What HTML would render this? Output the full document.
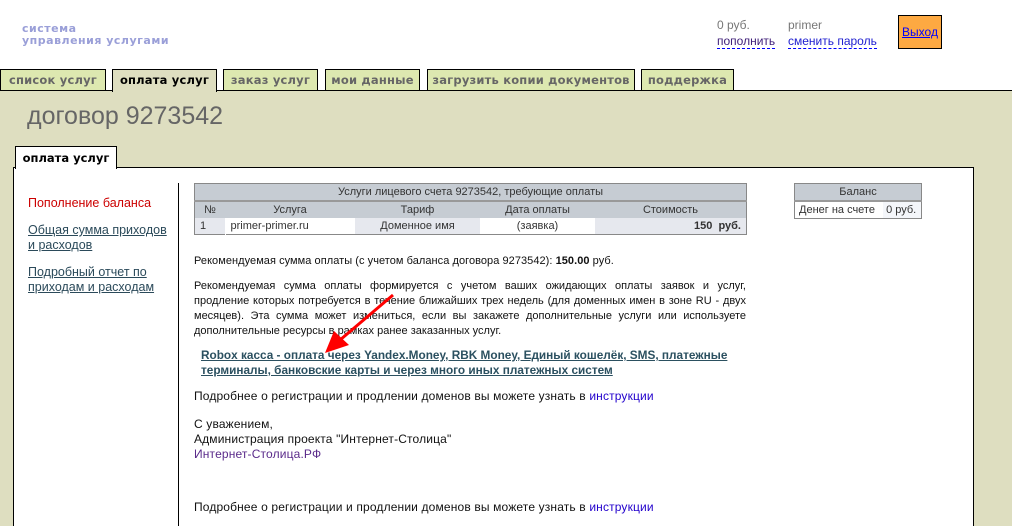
<!DOCTYPE html>
<html><head><meta charset="utf-8"><style>
html,body{margin:0;width:1012px;height:526px;overflow:hidden}
body{background:#fff;font-family:"Liberation Sans",Arial,sans-serif;position:relative}
.a{position:absolute}
.logo{left:22px;top:23px;color:#9a9fd8;font-weight:bold;font-size:11px;line-height:12px;font-family:"DejaVu Sans",sans-serif;letter-spacing:0.5px}
.tab{position:absolute;top:69px;height:20px;background:#dde8b0;border:1px solid #000;border-bottom:none;font-family:"DejaVu Sans",sans-serif;font-weight:bold;font-size:11.5px;color:#666;line-height:20px;text-align:center;letter-spacing:0.2px}
.band{left:0;top:90px;width:1012px;height:436px;background:#dedec0;border-top:1px solid #000}
.panel{left:13px;top:167px;width:959px;height:380px;background:#fff;border:1px solid #000}
table{border-collapse:collapse;font-size:11px;color:#333}
td{padding:0 5px;height:16px}
.t{font-size:11px;color:#111;line-height:15px}
.j span{display:block;text-align:justify;text-align-last:justify}
a.u{color:#2b4a5a;text-decoration:underline}
</style></head><body>
<div class="a logo">система<br>управления услугами</div>
<div class="a" style="left:717px;top:17px;font-size:12px;color:#777;line-height:16px">0 руб.<br><span style="color:#40207a;border-bottom:1px dashed #00f">пополнить</span></div>
<div class="a" style="left:788px;top:17px;font-size:12px;color:#777;line-height:16px">primer<br><span style="color:#2020d0;border-bottom:1px dashed #00f">сменить пароль</span></div>
<div class="a" style="left:898px;top:15px;width:42px;height:32px;background:#fda942;border:1px solid #000;font-size:12px;line-height:32px;text-align:center"><span style="color:#00f;text-decoration:underline">Выход</span></div>
<div class="a band"></div>
<div class="tab" style="left:0;width:104px">список услуг</div>
<div class="tab" style="left:112px;width:103px;height:22px;background:#dedec0;color:#000">оплата услуг</div>
<div class="tab" style="left:223px;width:93px">заказ услуг</div>
<div class="tab" style="left:325px;width:93px">мои данные</div>
<div class="tab" style="left:427px;width:206px">загрузить копии документов</div>
<div class="tab" style="left:641px;width:91px">поддержка</div>
<div class="a" style="left:27px;top:102px;font-size:25px;color:#666">договор 9273542</div>
<div class="a panel"></div>
<div class="a" style="left:15px;top:146px;width:100px;height:22px;background:#fff;border:1px solid #000;border-bottom:none;font-family:'DejaVu Sans',sans-serif;font-weight:bold;font-size:11.5px;line-height:22px;text-align:center">оплата услуг</div>
<div class="a" style="left:178px;top:183px;width:1px;height:343px;background:#000"></div>
<div class="a" style="left:28px;top:196px;font-size:12.5px;line-height:15px;color:#c00">Пополнение баланса</div>
<div class="a" style="left:28px;top:223px;font-size:12.5px;line-height:15px"><a class="u">Общая сумма приходов<br>и расходов</a></div>
<div class="a" style="left:28px;top:265px;font-size:12.5px;line-height:15px"><a class="u">Подробный отчет по<br>приходам и расходам</a></div>
<table class="a" style="left:194px;top:183px;width:553px;border:1px solid #888">
<tr style="background:#c6ccd3"><td colspan="5" style="text-align:center;border-bottom:2px solid #999">Услуги лицевого счета 9273542, требующие оплаты</td></tr>
<tr style="background:#c6ccd3;text-align:center"><td style="width:20px">№</td><td style="width:120px">Услуга</td><td style="width:115px">Тариф</td><td style="width:105px">Дата оплаты</td><td>Стоимость</td></tr>
<tr style="background:#e6e8ee"><td>1</td><td style="background:#fff;border-left:1px solid #fff">primer-primer.ru</td><td style="text-align:center">Доменное имя</td><td style="text-align:center;background:#fff">(заявка)</td><td style="text-align:right;font-weight:bold">150&nbsp; руб.</td></tr>
</table>
<table class="a" style="left:794px;top:183px;width:128px;border:1px solid #888">
<tr style="background:#c6ccd3"><td colspan="2" style="text-align:center;border-bottom:2px solid #999">Баланс</td></tr>
<tr><td style="padding:0 4px">Денег на счете</td><td style="padding:0 3px;background:#f4f6fa">0 руб.</td></tr>
</table>
<div class="a t" style="left:194px;top:254px;letter-spacing:0.05px">Рекомендуемая сумма оплаты (с учетом баланса договора 9273542): <b>150.00</b> руб.</div>
<div class="a t j" style="left:194px;top:279px;width:552px"><span>Рекомендуемая сумма оплаты формируется с учетом ваших ожидающих оплаты заявок и услуг,</span><span>продление которых потребуется в течение ближайших трех недель (для доменных имен в зоне RU - двух</span><span>месяцев). Эта сумма может измениться, если вы закажете дополнительные услуги или используете</span><span style="text-align-last:left">дополнительные ресурсы в рамках ранее заказанных услуг.</span></div>
<div class="a" style="left:201px;top:348px;font-size:11.8px;line-height:15px;font-weight:bold"><a class="u" style="color:#2b5060">Robox касса - оплата через Yandex.Money, RBK Money, Единый кошелёк, SMS, платежные<br>терминалы, банковские карты и через много иных платежных систем</a></div>
<div class="a" style="left:194px;top:389px;font-size:12px;color:#111;letter-spacing:0.15px">Подробнее о регистрации и продлении доменов вы можете узнать в <span style="color:#20c">инструкции</span></div>
<div class="a" style="left:194px;top:417px;font-size:12px;line-height:15px;color:#111;letter-spacing:0.15px">С уважением,<br>Администрация проекта "Интернет-Столица"<br><span style="color:#5a2a8a">Интернет-Столица.РФ</span></div>
<div class="a" style="left:194px;top:500px;font-size:12px;color:#111;letter-spacing:0.15px">Подробнее о регистрации и продлении доменов вы можете узнать в <span style="color:#20c">инструкции</span></div>
<svg class="a" style="left:0;top:0" width="1012" height="526"><line x1="393" y1="295" x2="340" y2="340" stroke="#f00" stroke-width="3"/><polygon points="325,353 334,331 349,345" fill="#f00"/></svg>
</body></html>
